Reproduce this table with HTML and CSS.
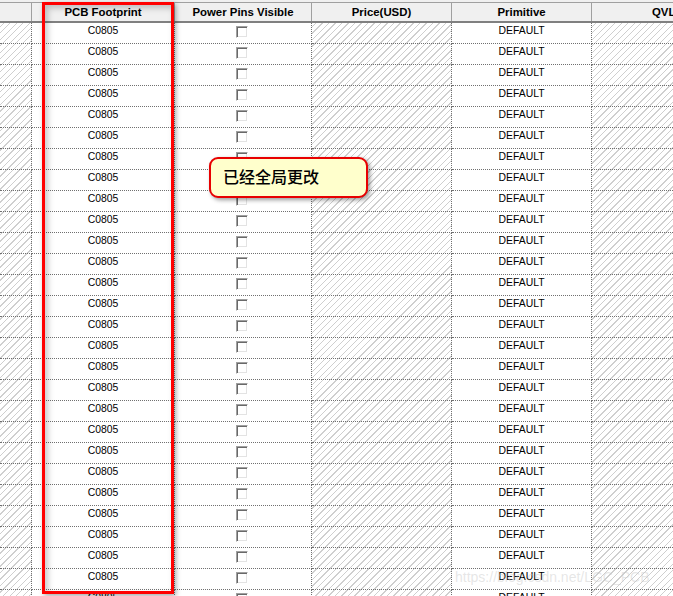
FILE: index.html
```html
<!DOCTYPE html>
<html>
<head>
<meta charset="utf-8">
<link rel="stylesheet" href="styles.css">
</head>
<body>
<div class="grid">
  <div class="head">
    <div class="hrow">
      <div class="hc c0"></div>
      <div class="hc c1">PCB Footprint</div>
      <div class="hc c2">Power Pins Visible</div>
      <div class="hc c3">Price(USD)</div>
      <div class="hc c4">Primitive</div>
      <div class="hc c5">QVL</div>
    </div>
  </div>
  <div class="body">
    <div class="row"><div class="c c0 h"></div><div class="c c1">C0805</div><div class="c c2"><span class="cb"></span></div><div class="c c3 h"></div><div class="c c4">DEFAULT</div><div class="c c5 h"></div></div>
    <div class="row"><div class="c c0 h"></div><div class="c c1">C0805</div><div class="c c2"><span class="cb"></span></div><div class="c c3 h"></div><div class="c c4">DEFAULT</div><div class="c c5 h"></div></div>
    <div class="row"><div class="c c0 h"></div><div class="c c1">C0805</div><div class="c c2"><span class="cb"></span></div><div class="c c3 h"></div><div class="c c4">DEFAULT</div><div class="c c5 h"></div></div>
    <div class="row"><div class="c c0 h"></div><div class="c c1">C0805</div><div class="c c2"><span class="cb"></span></div><div class="c c3 h"></div><div class="c c4">DEFAULT</div><div class="c c5 h"></div></div>
    <div class="row"><div class="c c0 h"></div><div class="c c1">C0805</div><div class="c c2"><span class="cb"></span></div><div class="c c3 h"></div><div class="c c4">DEFAULT</div><div class="c c5 h"></div></div>
    <div class="row"><div class="c c0 h"></div><div class="c c1">C0805</div><div class="c c2"><span class="cb"></span></div><div class="c c3 h"></div><div class="c c4">DEFAULT</div><div class="c c5 h"></div></div>
    <div class="row"><div class="c c0 h"></div><div class="c c1">C0805</div><div class="c c2"><span class="cb"></span></div><div class="c c3 h"></div><div class="c c4">DEFAULT</div><div class="c c5 h"></div></div>
    <div class="row"><div class="c c0 h"></div><div class="c c1">C0805</div><div class="c c2"><span class="cb"></span></div><div class="c c3 h"></div><div class="c c4">DEFAULT</div><div class="c c5 h"></div></div>
    <div class="row"><div class="c c0 h"></div><div class="c c1">C0805</div><div class="c c2"><span class="cb"></span></div><div class="c c3 h"></div><div class="c c4">DEFAULT</div><div class="c c5 h"></div></div>
    <div class="row"><div class="c c0 h"></div><div class="c c1">C0805</div><div class="c c2"><span class="cb"></span></div><div class="c c3 h"></div><div class="c c4">DEFAULT</div><div class="c c5 h"></div></div>
    <div class="row"><div class="c c0 h"></div><div class="c c1">C0805</div><div class="c c2"><span class="cb"></span></div><div class="c c3 h"></div><div class="c c4">DEFAULT</div><div class="c c5 h"></div></div>
    <div class="row"><div class="c c0 h"></div><div class="c c1">C0805</div><div class="c c2"><span class="cb"></span></div><div class="c c3 h"></div><div class="c c4">DEFAULT</div><div class="c c5 h"></div></div>
    <div class="row"><div class="c c0 h"></div><div class="c c1">C0805</div><div class="c c2"><span class="cb"></span></div><div class="c c3 h"></div><div class="c c4">DEFAULT</div><div class="c c5 h"></div></div>
    <div class="row"><div class="c c0 h"></div><div class="c c1">C0805</div><div class="c c2"><span class="cb"></span></div><div class="c c3 h"></div><div class="c c4">DEFAULT</div><div class="c c5 h"></div></div>
    <div class="row"><div class="c c0 h"></div><div class="c c1">C0805</div><div class="c c2"><span class="cb"></span></div><div class="c c3 h"></div><div class="c c4">DEFAULT</div><div class="c c5 h"></div></div>
    <div class="row"><div class="c c0 h"></div><div class="c c1">C0805</div><div class="c c2"><span class="cb"></span></div><div class="c c3 h"></div><div class="c c4">DEFAULT</div><div class="c c5 h"></div></div>
    <div class="row"><div class="c c0 h"></div><div class="c c1">C0805</div><div class="c c2"><span class="cb"></span></div><div class="c c3 h"></div><div class="c c4">DEFAULT</div><div class="c c5 h"></div></div>
    <div class="row"><div class="c c0 h"></div><div class="c c1">C0805</div><div class="c c2"><span class="cb"></span></div><div class="c c3 h"></div><div class="c c4">DEFAULT</div><div class="c c5 h"></div></div>
    <div class="row"><div class="c c0 h"></div><div class="c c1">C0805</div><div class="c c2"><span class="cb"></span></div><div class="c c3 h"></div><div class="c c4">DEFAULT</div><div class="c c5 h"></div></div>
    <div class="row"><div class="c c0 h"></div><div class="c c1">C0805</div><div class="c c2"><span class="cb"></span></div><div class="c c3 h"></div><div class="c c4">DEFAULT</div><div class="c c5 h"></div></div>
    <div class="row"><div class="c c0 h"></div><div class="c c1">C0805</div><div class="c c2"><span class="cb"></span></div><div class="c c3 h"></div><div class="c c4">DEFAULT</div><div class="c c5 h"></div></div>
    <div class="row"><div class="c c0 h"></div><div class="c c1">C0805</div><div class="c c2"><span class="cb"></span></div><div class="c c3 h"></div><div class="c c4">DEFAULT</div><div class="c c5 h"></div></div>
    <div class="row"><div class="c c0 h"></div><div class="c c1">C0805</div><div class="c c2"><span class="cb"></span></div><div class="c c3 h"></div><div class="c c4">DEFAULT</div><div class="c c5 h"></div></div>
    <div class="row"><div class="c c0 h"></div><div class="c c1">C0805</div><div class="c c2"><span class="cb"></span></div><div class="c c3 h"></div><div class="c c4">DEFAULT</div><div class="c c5 h"></div></div>
    <div class="row"><div class="c c0 h"></div><div class="c c1">C0805</div><div class="c c2"><span class="cb"></span></div><div class="c c3 h"></div><div class="c c4">DEFAULT</div><div class="c c5 h"></div></div>
    <div class="row"><div class="c c0 h"></div><div class="c c1">C0805</div><div class="c c2"><span class="cb"></span></div><div class="c c3 h"></div><div class="c c4">DEFAULT</div><div class="c c5 h"></div></div>
    <div class="row"><div class="c c0 h"></div><div class="c c1">C0805</div><div class="c c2"><span class="cb"></span></div><div class="c c3 h"></div><div class="c c4">DEFAULT</div><div class="c c5 h"></div></div>
    <div class="row"><div class="c c0 h"></div><div class="c c1">C0805</div><div class="c c2"><span class="cb"></span></div><div class="c c3 h"></div><div class="c c4">DEFAULT</div><div class="c c5 h"></div></div>
  </div>
</div>
<div class="highlight"></div>
<div class="callout">已经全局更改</div>
<div class="watermark">https://blog.csdn.net/LGC_PCB</div>
</body>
</html>
```
FILE: styles.css
```css
html, body {
  margin: 0;
  padding: 0;
}
body {
  width: 673px;
  height: 596px;
  overflow: hidden;
  position: relative;
  background: #ffffff;
  font-family: "Liberation Sans", Arial, sans-serif;
  color: #000;
}
.grid {
  display: flex;
  flex-direction: column;
  width: 673px;
}
.head {
  padding-top: 2px;
  background: #f0f0f0;
}
.hrow {
  display: flex;
  height: 21px;
  box-sizing: border-box;
  border-top: 1px solid #a0a0a0;
  border-bottom: 2px solid #808080;
  background: #f0f0f0;
}
.hc {
  box-sizing: border-box;
  border-right: 1px solid #a0a0a0;
  font-weight: bold;
  font-size: 11.4px;
  line-height: 18px;
  text-align: center;
  white-space: nowrap;
  overflow: hidden;
}
.c0 { width: 32px; flex: none; }
.c1 { width: 143px; flex: none; }
.c2 { width: 137px; flex: none; }
.c3 { width: 140px; flex: none; }
.c4 { width: 140px; flex: none; }
.c5 { flex: 1; border-right: none; }
.hc.c5 { text-align: left; padding-left: 60px; }
.body {
  display: flex;
  flex-direction: column;
}
.row {
  display: flex;
  height: 21px;
  flex: none;
}
.c {
  box-sizing: border-box;
  height: 21px;
  border-right: 1px dotted #707070;
  border-bottom: 1px dotted #707070;
  font-size: 10.4px;
  line-height: 13px;
  padding-top: 1px;
  text-align: center;
  white-space: nowrap;
  overflow: hidden;
}
.c.c5 { border-right: none; }
.h {
  background-color: #ffffff;
  background-image: repeating-linear-gradient(135deg, #cfcfcf 0, #cfcfcf 1px, #ffffff 1px, #ffffff 4.6px);
  background-attachment: fixed;
}
.c2 {
  display: flex;
  justify-content: center;
  align-items: flex-start;
}
.cb {
  display: block;
  width: 12px;
  height: 12px;
  box-sizing: border-box;
  margin-top: 2px;
  margin-right: 2px;
  background: #ffffff;
  border-style: solid;
  border-width: 1px;
  border-color: #a0a0a0 #ffffff #ffffff #a0a0a0;
  box-shadow: inset 1px 1px 0 #696969, inset -1px -1px 0 #e3e3e3;
}
.highlight {
  position: absolute;
  left: 42px;
  top: 2px;
  width: 132px;
  height: 592px;
  box-sizing: border-box;
  border: 3px solid #ff0000;
  box-shadow: 2px 2px 5px rgba(0, 0, 0, 0.35), inset 3px 3px 6px rgba(0, 0, 0, 0.22);
}
.callout {
  position: absolute;
  left: 209px;
  top: 157px;
  width: 159px;
  height: 41px;
  box-sizing: border-box;
  border: 2px solid #e80000;
  border-radius: 9px;
  background: #ffffcc;
  box-shadow: 2px 2px 4px rgba(0, 0, 0, 0.4);
  padding: 5px 0 0 12px;
  font-family: "Noto Sans CJK SC", "Noto Sans", sans-serif;
  font-weight: 500;
  font-size: 16px;
  line-height: 24px;
  color: #000;
  white-space: nowrap;
}
.watermark {
  position: absolute;
  left: 455px;
  top: 569px;
  font-family: "Liberation Sans", Arial, sans-serif;
  font-size: 14px;
  color: rgba(200, 200, 200, 0.45);
  white-space: nowrap;
}
```
